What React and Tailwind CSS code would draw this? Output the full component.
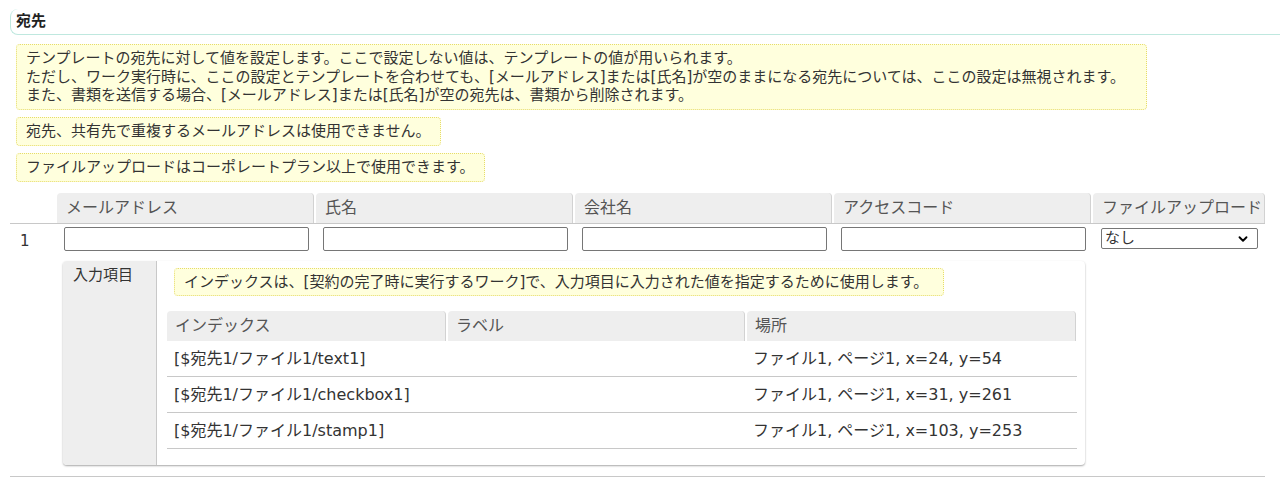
import { ChevronDown } from 'lucide-react'

function Note({ children, className = '' }) {
  return (
    <div className={`border border-dotted border-[#e6dc6a] bg-[#ffffdd] rounded-[4px] px-[9px] py-[4px] leading-[18.5px] ${className}`}>
      {children}
    </div>
  )
}

function HeadCell({ children, className = '' }) {
  return (
    <div className={`h-[30px] bg-[#eeeeee] rounded-t-[4px] border-r border-[#d2d2d2] flex items-center text-[16px] text-[#555] ${className}`}>
      {children}
    </div>
  )
}

const fields = [
  { index: '[$宛先1/ファイル1/text1]', label: '', place: 'ファイル1, ページ1, x=24, y=54' },
  { index: '[$宛先1/ファイル1/checkbox1]', label: '', place: 'ファイル1, ページ1, x=31, y=261' },
  { index: '[$宛先1/ファイル1/stamp1]', label: '', place: 'ファイル1, ページ1, x=103, y=253' },
]

export default function App() {
  return (
    <div className="w-[1280px] h-[484px] bg-white text-[#333] text-[15px] font-['DejaVu_Sans','Noto_Sans_CJK_JP',sans-serif] overflow-hidden">
      {/* section title */}
      <div className="pt-[9px] pl-[10px]">
        <div className="h-[26px] border-l border-b border-[#bfe8df] rounded-l-[8px] pl-[5px] flex items-center font-bold text-[15px] text-[#222]">
          宛先
        </div>
      </div>

      <div className="pl-[16px] mt-[9px] flex flex-col items-start gap-[7.5px]">
        <Note className="w-[1131px]">
          テンプレートの宛先に対して値を設定します。ここで設定しない値は、テンプレートの値が用いられます。<br />
          ただし、ワーク実行時に、ここの設定とテンプレートを合わせても、[メールアドレス]または[氏名]が空のままになる宛先については、ここの設定は無視されます。<br />
          また、書類を送信する場合、[メールアドレス]または[氏名]が空の宛先は、書類から削除されます。
        </Note>
        <Note>宛先、共有先で重複するメールアドレスは使用できません。</Note>
        <Note>ファイルアップロードはコーポレートプラン以上で使用できます。</Note>
      </div>

      <div className="ml-[10px] w-[1255px] mt-[11px]">
        <div className="grid grid-cols-[45px_257px_257px_257px_257px_172px] gap-x-[2px]">
          <div />
          <HeadCell className="pl-[9px]">メールアドレス</HeadCell>
          <HeadCell className="pl-[9px]">氏名</HeadCell>
          <HeadCell className="pl-[9px]">会社名</HeadCell>
          <HeadCell className="pl-[9px]">アクセスコード</HeadCell>
          <HeadCell className="pl-[9px]">ファイルアップロード</HeadCell>
        </div>

        <div className="border-t border-b border-[#c8c8c8]">
          <div className="grid grid-cols-[45px_257px_257px_257px_257px_172px] gap-x-[2px]">
            <div className="pl-[10px] pt-[5px] leading-[24px]">1</div>
            {[0, 1, 2, 3].map((i) => (
              <div key={i} className="pl-[7px] pr-[5px] pt-[3px]">
                <input type="text" className="block w-full h-[24px] border border-[#767676] rounded-[2px] bg-white" />
              </div>
            ))}
            <div className="pl-[8px] pr-[7px] pt-[4px]">
              <div className="relative h-[21px] border border-[#767676] rounded-[2px] bg-white flex items-center pl-[3px] leading-[18px]">
                なし
                <ChevronDown size={14} strokeWidth={3.2} className="absolute right-[7px] top-[3px] text-black" />
              </div>
            </div>

            <div className="col-start-2 col-span-4 pt-[8px] pl-[6px] pr-[6px] pb-[11px]">
              <div className="flex rounded-[4px] shadow-[0_1px_2px_rgba(0,0,0,0.35)]">
                <div className="w-[94px] shrink-0 bg-[#eeeeee] border-r border-[#c8c8c8] rounded-l-[4px] pl-[10px] pt-[4px] leading-[20px]">
                  入力項目
                </div>
                <div className="flex-1 pl-[10px] pr-[8px] pt-[7px] pb-[16px]">
                  <Note className="ml-[7px] w-[770px]">
                    インデックスは、[契約の完了時に実行するワーク]で、入力項目に入力された値を指定するために使用します。
                  </Note>
                  <div className="mt-[15px] w-[910px]">
                    <div className="grid grid-cols-[279px_297px_329px] gap-x-[2px]">
                      <HeadCell className="pl-[8px]">インデックス</HeadCell>
                      <HeadCell className="pl-[8px]">ラベル</HeadCell>
                      <HeadCell className="pl-[8px]">場所</HeadCell>
                    </div>
                    {fields.map((f) => (
                      <div key={f.index} className="grid grid-cols-[279px_297px_334px] h-[36px] border-b border-[#c8c8c8] items-center text-[16px]">
                        <div className="pl-[7px]">{f.index}</div>
                        <div className="pl-[8px]">{f.label}</div>
                        <div className="pl-[10px]">{f.place}</div>
                      </div>
                    ))}
                  </div>
                </div>
              </div>
            </div>
          </div>
        </div>
      </div>
    </div>
  )
}
